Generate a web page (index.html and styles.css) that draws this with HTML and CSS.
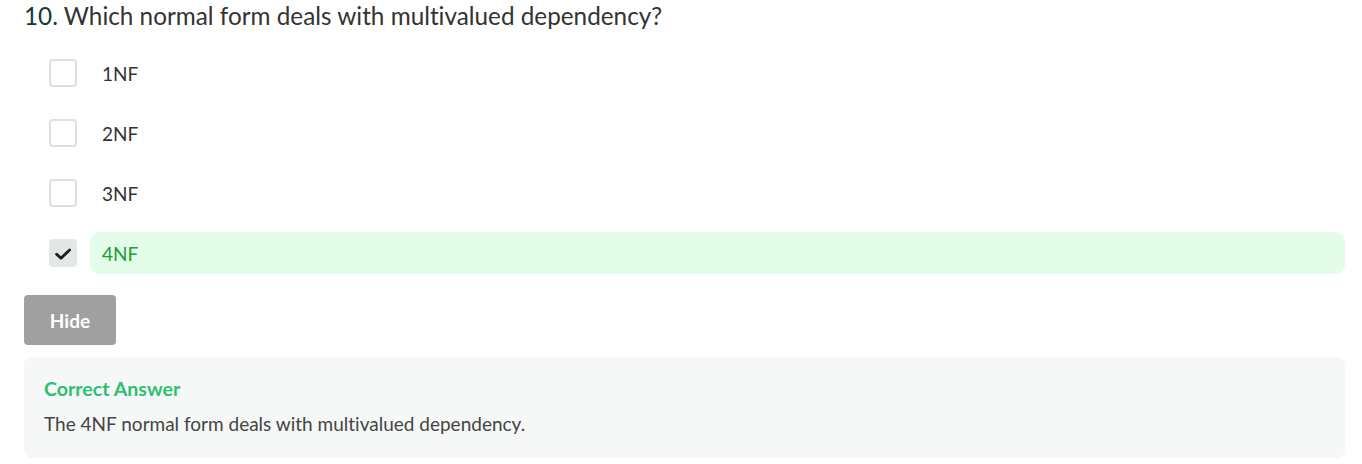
FILE: index.html
```html
<!DOCTYPE html>
<html>
<head>
<meta charset="utf-8">
<link rel="stylesheet" href="styles.css">
</head>
<body>
<div class="quiz">
  <h2 class="question"><span class="num">10.</span> Which normal form deals with multivalued dependency?</h2>
  <ul class="options">
    <li class="option"><span class="box"></span><span class="label">1NF</span></li>
    <li class="option"><span class="box"></span><span class="label">2NF</span></li>
    <li class="option"><span class="box"></span><span class="label">3NF</span></li>
    <li class="option correct"><span class="box checked"><svg width="18" height="18" viewBox="0 0 18 18"><path d="M2.6 10.2 L7 14.2 L15.6 6" fill="none" stroke="#1e1e1e" stroke-width="2.9" stroke-linecap="round" stroke-linejoin="round"/></svg></span><span class="label">4NF</span></li>
  </ul>
  <button class="hide">Hide</button>
  <div class="answer">
    <div class="answer-title">Correct Answer</div>
    <div class="answer-text">The 4NF normal form deals with multivalued dependency.</div>
  </div>
</div>
</body>
</html>
```
FILE: styles.css
```css
* { box-sizing: border-box; }
html, body { margin: 0; padding: 0; background: #fff; }
body { font-family: Lato, "Open Sans", sans-serif; color: #333; font-variant-ligatures: no-common-ligatures; }
.quiz { padding: 0 17px 0 24px; }
.question {
  margin: 0;
  font-size: 24.3px;
  font-weight: 400;
  line-height: 32px;
  color: #333;
}
.question .num { color: #0f3b3a; }
.options { list-style: none; margin: 0; padding: 20px 0 0 0; display: flex; flex-direction: column; gap: 18px; }
.option { display: flex; align-items: center; height: 42px; }
.box {
  width: 28px; height: 28px;
  margin-left: 25px;
  border: 2px solid #dde0e0;
  border-radius: 4px;
  flex: none;
  display: flex; align-items: center; justify-content: center;
}
.box.checked { background: #e3e7e8; border-color: #e3e7e8; }
.label {
  margin-left: 13px;
  flex: 1;
  height: 42px;
  display: flex; align-items: center;
  padding-left: 12px;
  font-size: 19px;
  color: #333;
  border-radius: 9px;
}
.correct .label { background: #e4fde9; color: #17a033; }
.hide {
  margin-top: 21px;
  width: 92px; height: 50px;
  background: #a0a0a0;
  color: #fff;
  border: none;
  border-radius: 4px;
  font-family: Lato, sans-serif;
  font-weight: 700;
  font-size: 19px;
  display: block;
}
.answer {
  margin-top: 12px;
  background: #f6f8f7;
  border-radius: 8px;
  padding: 20px;
  height: 101px;
}
.answer-title { color: #2ebf72; font-weight: 700; font-size: 19.6px; line-height: 24px; }
.answer-text { margin-top: 11px; font-size: 19px; line-height: 24px; color: #444; }
```
